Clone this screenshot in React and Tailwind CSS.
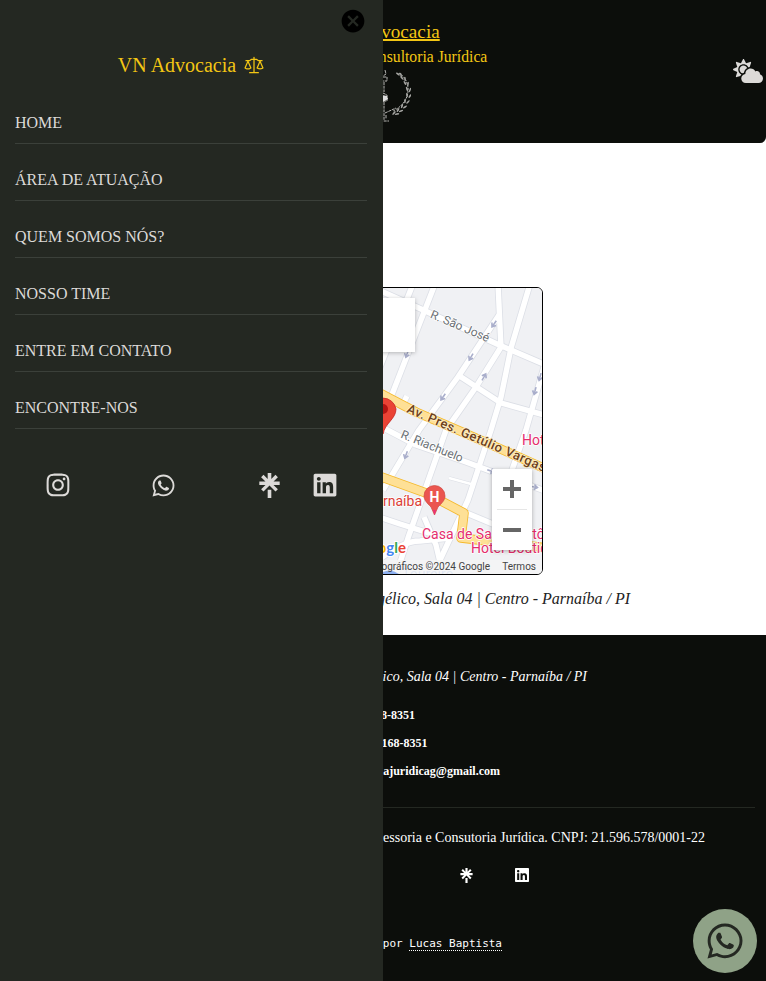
import React from "react";
import { FaCloudSun, FaWhatsapp, FaInstagram, FaLinkedin } from "react-icons/fa";
import { SiLinktree } from "react-icons/si";
import { GoLaw } from "react-icons/go";
import { IoMdCloseCircle } from "react-icons/io";

const LINKS = ["HOME", "ÁREA DE ATUAÇÃO", "QUEM SOMOS NÓS?", "NOSSO TIME", "ENTRE EM CONTATO", "ENCONTRE-NOS"];

const STREETS = [
  "M370 286L383 292L421 309L497 344L548 366",
  "M413 284L370 392",
  "M435 284L391 397",
  "M407 396L403 404",
  "M498 284L501 347L476 387L446 430L408 538L396 575",
  "M530 284L511 348L501 397L491 430L468 500L440 560",
  "M499 315L458 377L419 430L383 490",
  "M458 375L501 403L548 416",
  "M546 360L526 430L512 470",
  "M376 424L416 445L466 462L493 472L548 492",
  "M376 516L400 524L432 534",
  "M464 512L500 527",
  "M424 517L436 545L443 575",
  "M376 562Q402 541 420 541L450 538",
];

const AVENUES = ["M370 388L416 412L460 431L548 470", "M376 475L426 493L464 513L461 538L548 548"];

const ARROWS = [
  [494, 324, 125], [471, 357, 120], [484, 377, -60], [443, 397, 125], [407, 354, 110],
  [406, 455, 110], [535, 391, 105], [540, 377, 105], [534, 487, 10], [491, 471, 20],
];

function MapView() {
  return (
    <svg viewBox="224 288 318 286" className="block h-full w-full">
      <rect x="223" y="287" width="320" height="288" fill="#f0f1f4" />
      <g fill="none" strokeLinejoin="round">
        {STREETS.map((d) => <path key={d} d={d} stroke="#dcdfe6" strokeWidth="7" />)}
        <path d="M449 478L471 484" stroke="#dcdfe6" strokeWidth="3.600" />
        {STREETS.map((d) => <path key={d} d={d} stroke="#fff" strokeWidth="5.400" />)}
        <path d="M449 478L471 484" stroke="#fff" strokeWidth="2.400" />
        {AVENUES.map((d) => <path key={d} d={d} stroke="#f5b92c" strokeWidth="9.500" />)}
        {AVENUES.map((d) => <path key={d} d={d} stroke="#fee096" strokeWidth="7.800" />)}
      </g>
      {ARROWS.map(([x, y, a]) => (
        <path key={`${x}-${y}`} transform={`translate(${x} ${y}) rotate(${a})`} d="M-4 0H3M0 -2.5L3.5 0L0 2.500" fill="none" stroke="#a9aecb" strokeWidth="1.600" />
      ))}
      <g fontFamily="Roboto, sans-serif" stroke="#fff" strokeWidth="1.500" paintOrder="stroke" strokeLinejoin="round">
        <text transform="translate(429.5 317.500) rotate(23)" fontSize="12" fill="#6b7075" textLength="63">R. São José</text>
        <text transform="translate(400 437.5) rotate(22)" fontSize="12" fill="#6b7075" textLength="66">R. Riachuelo</text>
        <text transform="translate(406 412) rotate(23.5)" fontSize="13" fontWeight="500" fill="#6d401b" stroke="#fff0c8" textLength="150">Av. Pres. Getúlio Vargas</text>
        <text x="522" y="445" fontSize="14" fill="#e52d6d">Hotel</text>
        <text x="422" y="506" fontSize="14" fill="#db3d38" textAnchor="end">Parnaíba</text>
        <text x="422" y="539" fontSize="14" fill="#e52d6d">Casa de Santo Antônio</text>
        <text x="471" y="553" fontSize="14" fill="#e52d6d">Hotel Boutique</text>
        <text x="402" y="579" fontSize="14" fill="#729be8">Toureiro</text>
      </g>
      <path d="M434.500 515L431 507C427 503 424 500 424 496A10.500 10.500 0 0 1 445 496C445 500 442 503 438 507Z" fill="#eb5650" stroke="#cf4841" strokeWidth=".7" />
      <path d="M433 510h3l-1.500 5z" fill="#ec2f78" />
      <text x="434.500" y="501.500" textAnchor="middle" fontFamily="Roboto, sans-serif" fontSize="14" fontWeight="700" fill="#fff">H</text>
      <path d="M383 434C382 423 370 419 370 409A13.200 13.200 0 0 1 396 409C396 419 385 423 383 434Z" fill="#ea4335" stroke="#c5221f" strokeWidth=".8" />
      <circle cx="383" cy="409" r="5" fill="#b31412" />
      <rect x="233" y="298" width="182" height="54" fill="#fff" style={{ filter: "drop-shadow(0 1px 2px rgba(0,0,0,.25))" }} />
      <text x="406" y="552.500" textAnchor="end" fontFamily="Lato, sans-serif" fontSize="15" fontWeight="700" stroke="#fff" strokeWidth="2" paintOrder="stroke">
        <tspan fill="#4285f4">G</tspan><tspan fill="#ea4335">o</tspan><tspan fill="#fbbc04">o</tspan><tspan fill="#4285f4">g</tspan><tspan fill="#34a853">l</tspan><tspan fill="#ea4335">e</tspan>
      </text>
      <rect x="492" y="469" width="40" height="81" rx="1" fill="#fff" style={{ filter: "drop-shadow(0 1px 2px rgba(0,0,0,.3))" }} />
      <path d="M503 489H521M512 480V498M503 530H521" stroke="#666" strokeWidth="4" />
      <path d="M497 509.500H527" stroke="#e6e6e6" />
      <rect x="223" y="560" width="320" height="15" fill="#f5f5f5" fillOpacity=".85" />
      <path d="M383 572q8 -4 16 2h-16z" fill="#8db0f0" />
      <g fontFamily="Roboto, sans-serif" fontSize="10" fill="#444">
        <text x="490" y="570" textAnchor="end">Dados cartográficos ©2024 Google</text>
        <text x="536" y="570" textAnchor="end">Termos</text>
      </g>
    </svg>
  );
}

function Emblem() {
  const leaves = [[400, 75], [404, 79], [407, 84], [409, 90], [409, 96], [407, 102], [404, 107], [400, 111], [396, 114]];
  return (
    <svg viewBox="355 70 56 54" className="h-[54px] w-[56px]">
      <g stroke="#b9b9b6" fill="none" strokeWidth="1">
        <path d="M385 71l1 4l-3 2M383 78h4v4h-4M384 83v10M383 94l4 2v6h-4M384 103v18M380 122h9M386 116v4M385 114l11 -5" strokeDasharray="3 .7" />
        <path d="M399 74C412 82 412 103 393 112" strokeDasharray="2 1" />
        <path d="M367 74C354 82 354 103 373 112" strokeDasharray="2 1" />
      </g>
      <g fill="#a5a5a2">
        {leaves.map(([x, y], i) => (
          <g key={y}>
            <ellipse cx={x - 2} cy={y} rx="2.300" ry=".9" transform={`rotate(${35 + i * 12} ${x - 2} ${y})`} />
            <ellipse cx={x + 1} cy={y + 1} rx="2.300" ry=".8" transform={`rotate(${75 + i * 12} ${x + 1} ${y + 1})`} />
          </g>
        ))}
      </g>
      <path d="M382 96l5 1l1 3l-5 3z" fill="#ddd" />
    </svg>
  );
}

function Drawer() {
  return (
    <aside className="fixed left-0 top-0 z-10 h-full w-[383px] bg-[#242822] pl-[15px] pr-4 text-[#dcdad8]">
      <button className="absolute right-[16px] top-[7px] text-black" aria-label="Fechar">
        <IoMdCloseCircle size={28} />
      </button>
      <div className="mt-[53px] flex h-6 items-center justify-center gap-[8px] text-xl leading-6 text-[#f3c614]">
        <span>VN Advocacia</span>
        <GoLaw size={20} />
      </div>
      <nav className="mt-[10px]">
        {LINKS.map((label) => (
          <a key={label} className="flex h-[57px] items-end border-b border-[#3b403a] pb-[8px] text-base leading-6">{label}</a>
        ))}
      </nav>
      <div className="mt-[43px] flex items-center pl-[29.5px]">
        <FaInstagram size={26} />
        <FaWhatsapp size={25} className="ml-[80.5px]" />
        <SiLinktree size={25} className="ml-[81px]" />
        <FaLinkedin size={26} className="ml-[29.5px]" />
      </div>
    </aside>
  );
}

export default function App() {
  return (
    <div className="min-h-[981px] bg-white font-['Liberation_Serif',serif]">
      <Drawer />
      <header className="flex h-[143px] items-center rounded-b-md bg-[#0c0e0b] text-[#f3c614]">
        <div className="w-8" />
        <div className="flex h-full flex-1 flex-col items-center pt-5">
          <h1 className="text-[19.2px] leading-6 underline decoration-2 underline-offset-1">VN Advocacia</h1>
          <p className="mt-[1px] text-[15.7px] leading-6">Assessoria e Consultoria Jurídica</p>
          <Emblem />
        </div>
        <div className="w-8 pb-px text-[#dcdad8]"><FaCloudSun size={30} className="ml-[-1px]" /></div>
      </header>
      <main className="flex h-[492px] flex-col items-center pt-36">
        <div className="h-[288px] w-[320px] overflow-hidden rounded-md border border-black"><MapView /></div>
        <p className="mt-3 w-[494px] whitespace-nowrap text-right text-base italic leading-6 text-[#222]">Angélico, Sala 04 | Centro - Parnaíba / PI</p>
      </main>
      <footer className="flex h-[346px] flex-col items-center bg-[#0c0e0b] px-[11px] pt-8 text-white">
        <p className="w-[408px] text-right text-sm italic leading-5">Angélico, Sala 04 | Centro - Parnaíba / PI</p>
        <ul className="mt-[18px] flex w-[234px] flex-col gap-2 text-xs font-bold leading-5">
          <li className="w-[149px] text-right">98168-8351</li>
          <li className="w-[161.5px] text-right">98168-8351</li>
          <li className="text-right">assessoriajuridicag@gmail.com</li>
        </ul>
        <div className="mt-[26px] h-px w-full bg-[#242822]" />
        <p className="mt-5 w-[644px] text-right text-sm leading-5">Assessoria e Consutoria Jurídica. CNPJ: 21.596.578/0001-22</p>
        <div className="mt-[19px] flex w-[293px] items-center justify-end gap-[40px]">
          <SiLinktree size={15} />
          <FaLinkedin size={16} />
        </div>
        <p className="mt-[52.5px] w-[238px] text-right font-['DejaVu_Sans_Mono',monospace] text-[11px] leading-4">por <span className="border-b border-dotted border-white">Lucas Baptista</span></p>
      </footer>
      <a className="fixed bottom-2 right-[9px] z-20 flex h-16 w-16 items-center justify-center rounded-full bg-[#8fa287] text-[#242822]">
        <FaWhatsapp size={40} />
      </a>
    </div>
  );
}
